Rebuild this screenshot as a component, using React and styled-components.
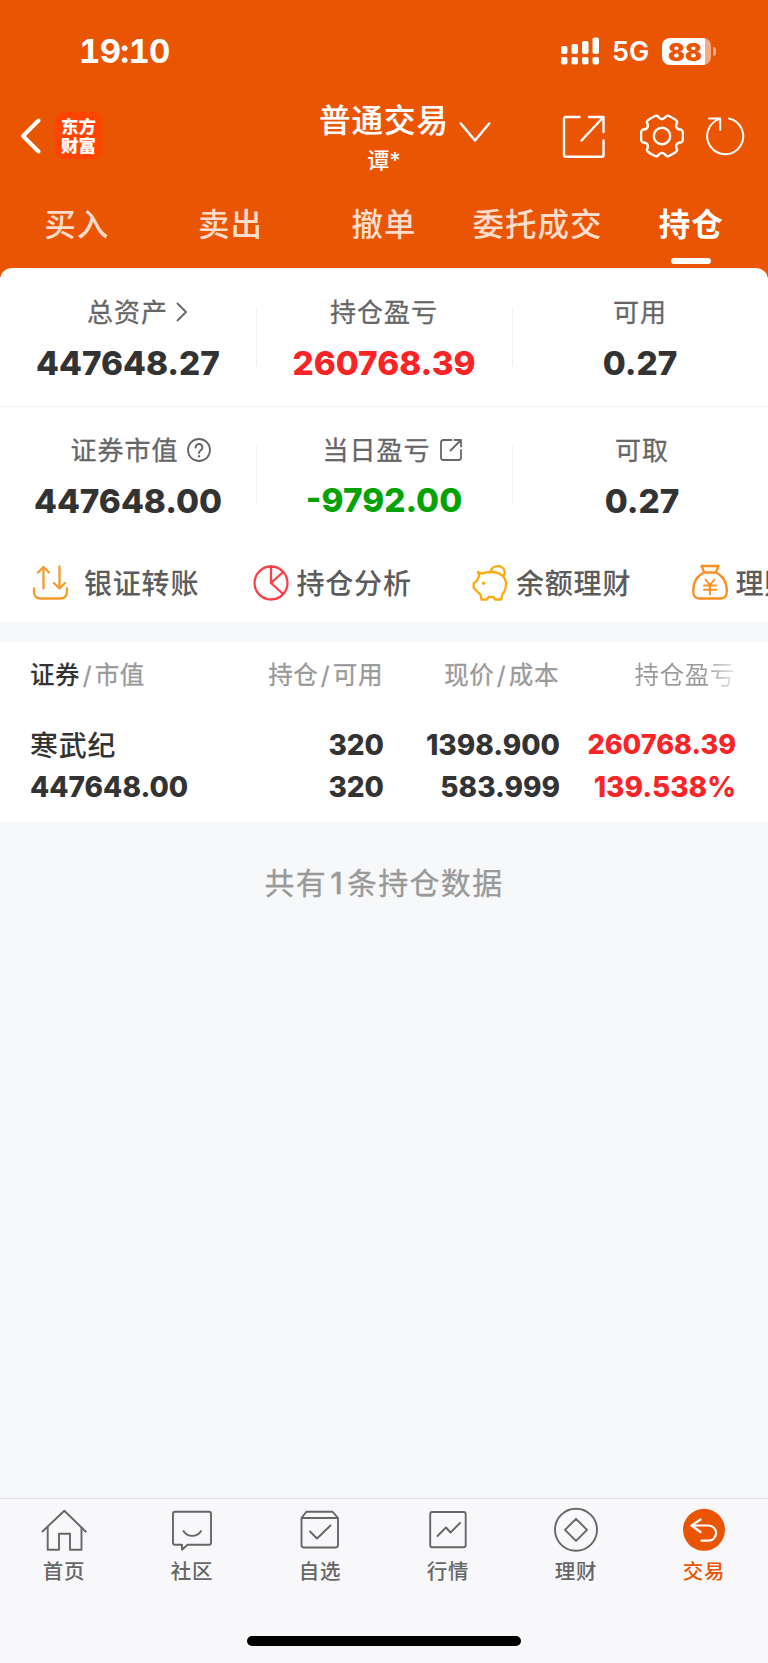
import React from "react";
import styled, { createGlobalStyle } from "styled-components";

const orange = "#ea5504";
const cjk = `"Noto Sans CJK SC", sans-serif`;
const latin = `Inter, "Noto Sans CJK SC", sans-serif`;

const tabs = ["买入", "卖出", "撤单", "委托成交", "持仓"];

const assets = [
  { label: "总资产", value: "447648.27", icon: "arrow", shift: 19 },
  { label: "持仓盈亏", value: "260768.39", color: "#fa2426" },
  { label: "可用", value: "0.27" },
];

const market = [
  { label: "证券市值", value: "447648.00", icon: "help", shift: 25 },
  { label: "当日盈亏", value: "-9792.00", icon: "share", shift: 17, color: "#04a204", lift: 1 },
  { label: "可取", value: "0.27", nudge: 4 },
];

const navItems = [
  { label: "首页", icon: "home" },
  { label: "社区", icon: "chat" },
  { label: "自选", icon: "box" },
  { label: "行情", icon: "chart" },
  { label: "理财", icon: "diamond" },
  { label: "交易", icon: "trade", active: true },
];

// one tooth of the gear, turned six times round the centre
const gearPath = [0, 60, 120, 180, 240, 300]
  .map((deg, i) => {
    const a = (deg * Math.PI) / 180;
    const p = (x, y) =>
      `${(22 + x * Math.cos(a) - y * Math.sin(a)).toFixed(2)} ${(22 + x * Math.sin(a) + y * Math.cos(a)).toFixed(2)}`;
    return `${i ? "L" : "M"}${p(19.6, -6.2)}Q${p(20.8, -5.2)} ${p(20.8, -4)}Q${p(21.2, 0)} ${p(20.8, 4)}Q${p(20.8, 5.2)} ${p(19.6, 6.2)}Q${p(11.8, 6.8)} ${p(15.17, 13.87)}`;
  })
  .join("") + "Z";

const labelIcons = {
  arrow: (
    <svg width="12" height="20" viewBox="0 0 12 20">
      <path d="M1.5 1.5 10 10l-8.500 8.500" />
    </svg>
  ),
  help: (
    <svg width="24" height="24" viewBox="0 0 24 24">
      <circle cx="12" cy="12" r="11" />
      <path d="M8.600 9.400a3.400 3.400 0 1 1 5.500 2.600c-1.300 1-2.100 1.500-2.100 3" strokeWidth="2" />
      <path d="M12 18v.5" strokeWidth="2.200" />
    </svg>
  ),
  share: (
    <svg width="24" height="24" viewBox="0 0 24 24">
      <path d="M12.500 2H4.500Q2 2 2 4.500v15Q2 22 4.500 22h15q2.500 0 2.500-2.500V12M15.500 2H22v6.500M22 2 11.500 12.500" />
    </svg>
  ),
};

const navIcons = {
  home: (
    <>
      <path d="M1.500 22.500 23.300 1.700l21.500 21" />
      <path d="M6.700 18.500v22.200H18V24.700h11v16h11.500V18.500" />
    </>
  ),
  chat: (
    <>
      <path d="M6 2.700h34q2 0 2 2v29q0 2-2 2H18.500l-5.500 5v-5H6q-2 0-2-2v-29q0-2 2-2z" />
      <path d="M14.500 22c4 6.500 13.500 6.500 17.500 0" />
    </>
  ),
  box: (
    <>
      <path d="M4.500 9 9.500 2.700h26L41 9M4.500 9v27q0 2.500 2.500 2.500h31.500Q41 38.500 41 36V9z" />
      <path d="m13 22.500 7 7L33.500 16.500" />
    </>
  ),
  chart: (
    <>
      <rect x="5.200" y="3" width="35.500" height="35.300" rx="2" />
      <path d="m12.500 27 8.500-8.500 4.500 5 9.500-9.500" />
    </>
  ),
  diamond: (
    <>
      <circle cx="23" cy="20.800" r="21" />
      <path d="m23 9.800 11 11-11 11-11-11z" />
    </>
  ),
  trade: (
    <>
      <circle cx="23" cy="20.800" r="21" fill={orange} stroke="none" />
      <path d="M19.500 10.500 10.500 16.500l9 6.500M10.500 16.500h17a7.500 7.500 0 0 1 0 15.200H20.500" stroke="#fff" strokeWidth="2.200" />
    </>
  ),
};

const Stat = ({ label, value, icon, shift, color, lift, nudge }) => (
  <StatCell $nudge={nudge}>
    <StatLabel $shift={shift}>
      {label}
      {icon && labelIcons[icon]}
    </StatLabel>
    <StatValue $color={color} $lift={lift}>{value}</StatValue>
  </StatCell>
);

export default function App() {
  return (
    <>
      <GlobalStyle />
      <Page>
        <Header>
          <StatusBar>
            <Time>19:10</Time>
            <Signal width="39" height="28" viewBox="0 0 39 28">
              <rect x="0" y="9" width="6.500" height="8" rx="2" />
              <rect x="10.500" y="7" width="6.500" height="10" rx="2" />
              <rect x="21" y="4" width="6.500" height="13" rx="2" />
              <rect x="31.500" y="0.500" width="6.500" height="16.500" rx="2" />
              <rect x="0" y="20" width="6.500" height="7.500" rx="2" />
              <rect x="10.500" y="20" width="6.500" height="7.500" rx="2" />
              <rect x="21" y="20" width="6.500" height="7.500" rx="2" />
              <rect x="31.500" y="20" width="6.500" height="7.500" rx="2" />
            </Signal>
            <Network>5G</Network>
            <Battery>88</Battery>
            <BatteryTip />
          </StatusBar>
          <TitleBar>
            <BackIcon width="22" height="36" viewBox="0 0 22 36">
              <path d="M18.500 2.500 3 18l15.500 15.500" />
            </BackIcon>
            <Logo>
              <span>东方</span>
              <span>财富</span>
            </Logo>
            <TitleBlock>
              <Title>普通交易</Title>
              <SubTitle>谭*</SubTitle>
            </TitleBlock>
            <Chevron width="32" height="22" viewBox="0 0 32 22">
              <path d="M1.800 2.500 16 19.500 30.200 2.500" />
            </Chevron>
            <Actions>
              <svg width="44" height="44" viewBox="0 0 44 44">
                <path d="M17.500 2H4Q2 2 2 4v36q0 1.800 2 1.800h36q1.500 0 1.500-1.500V25.500M27 2h14.500v15M41 2.500 19.500 25.500" />
              </svg>
              <svg width="44" height="44" viewBox="0 0 44 44">
                <path d={gearPath} />
                <circle cx="22" cy="22" r="8.200" />
              </svg>
              <svg width="40" height="40" viewBox="0 0 40 40">
                <path d="M24 2.600A18 18 0 1 1 15.200 2.900M4 2.600h11.200v11.500" strokeWidth="2" />
              </svg>
            </Actions>
          </TitleBar>
          <Tabs>
            {tabs.map((tab, i) => (
              <Tab key={tab} $active={i === tabs.length - 1}>{tab}</Tab>
            ))}
          </Tabs>
        </Header>

        <Card>
          <StatRow>
            {assets.map((item) => <Stat key={item.label} {...item} />)}
          </StatRow>
          <StatRow>
            {market.map((item) => <Stat key={item.label} {...item} />)}
          </StatRow>
          <Shortcuts>
            <Shortcut $gap={14}>
              <svg width="38" height="38" viewBox="0 0 38 38" stroke="#f59a2c">
                <path d="M2 24.500v3Q2 34.500 9 34.500h18.500q7.500 0 7.500-7v-3M11.500 24.500V3M6 8.500 11.500 3l5.500 5.500M27.500 2.500v22M22 19l5.500 5.500L33 19" />
              </svg>
              银证转账
            </Shortcut>
            <Shortcut $gap={7}>
              <svg width="38" height="38" viewBox="0 0 38 38" stroke="#fc4048">
                <circle cx="19" cy="19" r="16.500" />
                <path d="M19 2.500V19l11.500 10.500M19 19 31 8" />
              </svg>
              持仓分析
            </Shortcut>
            <Shortcut $gap={7}>
              <svg width="38" height="38" viewBox="0 0 38 38" stroke="#fca90c">
                <path d="M7 8q2.500 1.500 4.500 1.500C14 8.200 16 8 20 8c9.500 0 15 5 15 12 0 4.500-1.200 7.500-3.500 10.300l-1.300 5.200H24l-1.500-2.500h-5L16 35.500h-5.500l-1-5-3-2.700L2.700 24v-4.800L6 16.700Q6.500 14 8.300 12z" />
                <path d="M19.500 7.800c1.500-8 14.200-7.500 14.200.7q0 1.500-1 2.800" />
                <circle cx="12.600" cy="19.300" r="1.700" fill="#fca90c" stroke="none" />
              </svg>
              余额理财
            </Shortcut>
            <Shortcut $gap={7}>
              <svg width="38" height="38" viewBox="0 0 38 38" stroke="#fb8d22">
                <path d="M10.500 2h17l-2.700 6.500H13.200zM13.200 8.500C5.500 12 2.200 19.500 2.200 27c0 5 2.200 7.500 6 7.500h21.600c3.800 0 6-2.500 6-7.500 0-7.500-3.300-15-11-18.500z" />
                <path d="m14.500 15.500 4.500 5.500 4.500-5.500M19 21v9.500M13 21.500h12M13 25.800h12" strokeWidth="1.900" />
              </svg>
              理财
            </Shortcut>
          </Shortcuts>
        </Card>

        <Holdings>
          <TableHead>
            <HeadCell $first><b>证券</b><i>/</i>市值</HeadCell>
            <HeadCell>持仓<i>/</i>可用</HeadCell>
            <HeadCell>现价<i>/</i>成本</HeadCell>
            <HeadCell $fade>持仓盈亏</HeadCell>
          </TableHead>
          <TableRow>
            <Cell $first><StockName>寒武纪</StockName><span>447648.00</span></Cell>
            <Cell><span>320</span><span>320</span></Cell>
            <Cell><span>1398.900</span><span>583.999</span></Cell>
            <Cell $up><Profit>260768.39</Profit><span>139.538%</span></Cell>
          </TableRow>
        </Holdings>

        <Summary>共有<em>1</em>条持仓数据</Summary>

        <BottomNav>
          <NavList>
            {navItems.map(({ label, icon, active }) => (
              <NavItem key={label} $active={active}>
                <svg width="46" height="43" viewBox="0 0 46 43">{navIcons[icon]}</svg>
                {label}
              </NavItem>
            ))}
          </NavList>
          <HomeBar />
        </BottomNav>
      </Page>
    </>
  );
}

const GlobalStyle = createGlobalStyle`
  * {
    box-sizing: border-box;
  }

  body {
    margin: 0;
    background: #f7f8fa;
  }

  svg {
    display: block;
    flex: none;
    fill: none;
    stroke-linecap: round;
    stroke-linejoin: round;
  }
`;

const Page = styled.div`
  display: flex;
  flex-direction: column;
  width: 768px;
  height: 1663px;
  overflow: hidden;
  font-family: ${cjk};
  font-weight: 500;
  background: #f7f8fa;
`;

const Header = styled.header`
  height: 280px;
  flex: none;
  color: #fff;
  background: ${orange};
`;

const StatusBar = styled.div`
  display: flex;
  align-items: center;
  height: 102px;
  padding-left: 79px;
  font-family: ${latin};
`;

const Time = styled.div`
  width: 482px;
  font-size: 33px;
  font-variant-numeric: tabular-nums;
  font-weight: 700;
  line-height: 40px;
  letter-spacing: -0.7px;
`;

const Signal = styled.svg`
  fill: #fff;
`;

const Network = styled.div`
  width: 50px;
  margin-left: 12px;
  padding-top: 2px;
  font-size: 27px;
  font-weight: 600;
  line-height: 30px;
`;

const Battery = styled.div`
  width: 49px;
  height: 27px;
  border-radius: 8px;
  background: linear-gradient(90deg, #fff 43px, #f5aa82 43px);
  color: ${orange};
  font-size: 25px;
  font-weight: 900;
  line-height: 28px;
  padding-left: 6px;
`;

const BatteryTip = styled.div`
  width: 3px;
  height: 9px;
  margin-left: 2px;
  border-radius: 0 3px 3px 0;
  background: #f5aa82;
`;

const TitleBar = styled.div`
  display: flex;
  height: 83px;
`;

const BackIcon = styled.svg`
  margin: 16px 0 0 20px;
  stroke: #fff;
  stroke-width: 4;
`;

const Logo = styled.div`
  display: flex;
  flex-direction: column;
  align-items: center;
  width: 47px;
  height: 47px;
  margin: 10px 0 0 13px;
  padding-top: 4px;
  border-radius: 9px;
  background: #ff4301;
  font-size: 17.500px;
  font-weight: 900;
  line-height: 19px;
`;

const TitleBlock = styled.div`
  width: 132px;
  margin-left: 216px;
  text-align: center;
`;

const Title = styled.div`
  margin-top: -2px;
  font-size: 31.500px;
  line-height: 36px;
  letter-spacing: 1px;
  white-space: nowrap;
  -webkit-text-stroke: 0.2px;
`;

const SubTitle = styled.div`
  margin-top: 11px;
  font-family: ${latin};
  font-size: 22px;
  line-height: 26px;
`;

const Chevron = styled.svg`
  margin: 19px 0 0 9px;
  stroke: #fff;
  stroke-width: 2.500;
`;

const Actions = styled.div`
  display: flex;
  margin: 13px 0 0 71px;
  stroke: #fff;
  stroke-width: 2.400;

  svg:nth-child(2) {
    margin: -1px 0 0 34px;
  }

  svg:nth-child(3) {
    margin: 1px 0 0 21px;
  }
`;

const Tabs = styled.nav`
  display: grid;
  grid-template-columns: repeat(5, 1fr);
`;

const Tab = styled.div`
  display: flex;
  flex-direction: column;
  align-items: center;
  height: 79px;
  padding-top: 16px;
  color: ${({ $active }) => ($active ? "#fff" : "#fcdccb")};
  font-size: 31.500px;
  font-weight: ${({ $active }) => ($active ? 700 : 500)};
  line-height: 42px;
  letter-spacing: 1px;

  &::after {
    content: "";
    width: 40px;
    height: 6px;
    margin-top: 15px;
    border-radius: 3px;
    background: ${({ $active }) => ($active ? "#fff" : "transparent")};
  }
`;

const Card = styled.section`
  height: 354px;
  flex: none;
  margin-top: -12px;
  border-radius: 12px 12px 0 0;
  background: #fff;
  overflow: hidden;
`;

const StatCell = styled.div`
  display: flex;
  flex-direction: column;
  align-items: center;
  padding: 25px 0 0 ${({ $nudge }) => $nudge || 0}px;

  & + & {
    background: linear-gradient(#f1f1f1, #f1f1f1) no-repeat left 39px / 1px 59px;
  }
`;

const StatRow = styled.div`
  display: grid;
  grid-template-columns: repeat(3, 256px);
  height: 138px;

  & + & {
    border-top: 1px solid #f0f0f0;
  }

  & + & ${StatCell} {
    padding-top: 24px;
  }
`;

const StatLabel = styled.div`
  display: flex;
  align-items: center;
  gap: 8px;
  height: 36px;
  padding-left: ${({ $shift }) => $shift || 0}px;
  color: #666;
  font-size: 26px;
  font-weight: 400;
  letter-spacing: 1px;
  line-height: 36px;
  white-space: nowrap;
  -webkit-text-stroke: 0.3px;

  svg {
    margin-top: 2px;
    stroke: #666;
    stroke-width: 1.800;
  }
`;

const StatValue = styled.div`
  margin-top: ${({ $lift }) => 14 - ($lift || 0)}px;
  color: ${({ $color }) => $color || "#333"};
  font-family: ${latin};
  font-size: 33.300px;
  font-weight: 800;
  line-height: 40px;
`;

const Shortcuts = styled.div`
  display: flex;
  width: 768px;
  height: 76px;
  padding: 0 0 0 32px;
`;

const Shortcut = styled.div`
  display: flex;
  flex: none;
  align-items: center;
  gap: ${({ $gap }) => $gap}px;
  width: 219.500px;
  color: #5c5c5c;
  font-size: 28px;
  letter-spacing: 0.8px;
  line-height: 40px;
  white-space: nowrap;

  svg {
    margin-top: 2px;
    stroke-width: 2.300;
  }
`;

const Holdings = styled.section`
  height: 180px;
  flex: none;
  margin-top: 20px;
  padding-left: 30px;
  background: #fff;
`;

const TableHead = styled.div`
  display: grid;
  grid-template-columns: 177px 176px 176px 176px;
  height: 82px;
  padding-top: 14px;
`;

const HeadCell = styled.div`
  color: #999;
  font-size: 24.500px;
  font-weight: 400;
  line-height: 36px;
  letter-spacing: 0.6px;
  text-align: ${({ $first }) => ($first ? "left" : "right")};
  white-space: nowrap;
  -webkit-text-stroke: 0.3px;

  b {
    color: #333;
    font-weight: 500;
    -webkit-text-stroke: 0;
  }

  i {
    margin: 0 2.500px;
    font-family: ${latin};
    font-style: normal;
  }

  ${({ $fade }) => $fade && `
    color: transparent;
    background: linear-gradient(90deg, #999 145px, #e8e8e8 176px);
    background-clip: text;
    -webkit-text-stroke: 0;
  `}
`;

const TableRow = styled(TableHead)`
  height: auto;
  padding: 0;
`;

const Cell = styled.div`
  display: flex;
  flex-direction: column;
  align-items: ${({ $first }) => ($first ? "flex-start" : "flex-end")};
  margin-right: -1px;
  color: ${({ $up }) => ($up ? "#fa2426" : "#333")};
  font-family: ${latin};
  font-size: 28px;
  font-weight: 800;
  line-height: 42px;
`;

const Profit = styled.span`
  font-size: 27px;
`;

const StockName = styled.span`
  margin: -1px 0 1px;
  font-family: ${cjk};
  font-size: 28px;
  font-weight: 500;
  letter-spacing: 0.8px;
`;

const Summary = styled.div`
  padding-top: 37px;
  color: #999;
  font-size: 30px;
  font-weight: 400;
  line-height: 44px;
  letter-spacing: 1.300px;
  text-align: center;
  -webkit-text-stroke: 0.3px;

  em {
    margin: 0 3px;
    font-family: ${latin};
    font-style: normal;
    font-weight: 500;
  }
`;

const BottomNav = styled.footer`
  display: flex;
  flex-direction: column;
  align-items: center;
  height: 165px;
  flex: none;
  margin-top: auto;
  border-top: 1px solid #e2e2e4;
  background: #f8f8fb;
`;

const NavList = styled.nav`
  display: grid;
  grid-template-columns: repeat(6, 128px);
`;

const NavItem = styled.div`
  display: flex;
  flex-direction: column;
  align-items: center;
  gap: 4px;
  padding-top: 10px;
  color: ${({ $active }) => ($active ? orange : "#666")};
  font-size: 20.500px;
  line-height: 28px;
  letter-spacing: 0.8px;

  svg {
    stroke: #666;
    stroke-width: 1.900;
    overflow: visible;
  }
`;

const HomeBar = styled.div`
  width: 274px;
  height: 10px;
  margin-top: 52px;
  border-radius: 5px;
  background: #000;
`;
